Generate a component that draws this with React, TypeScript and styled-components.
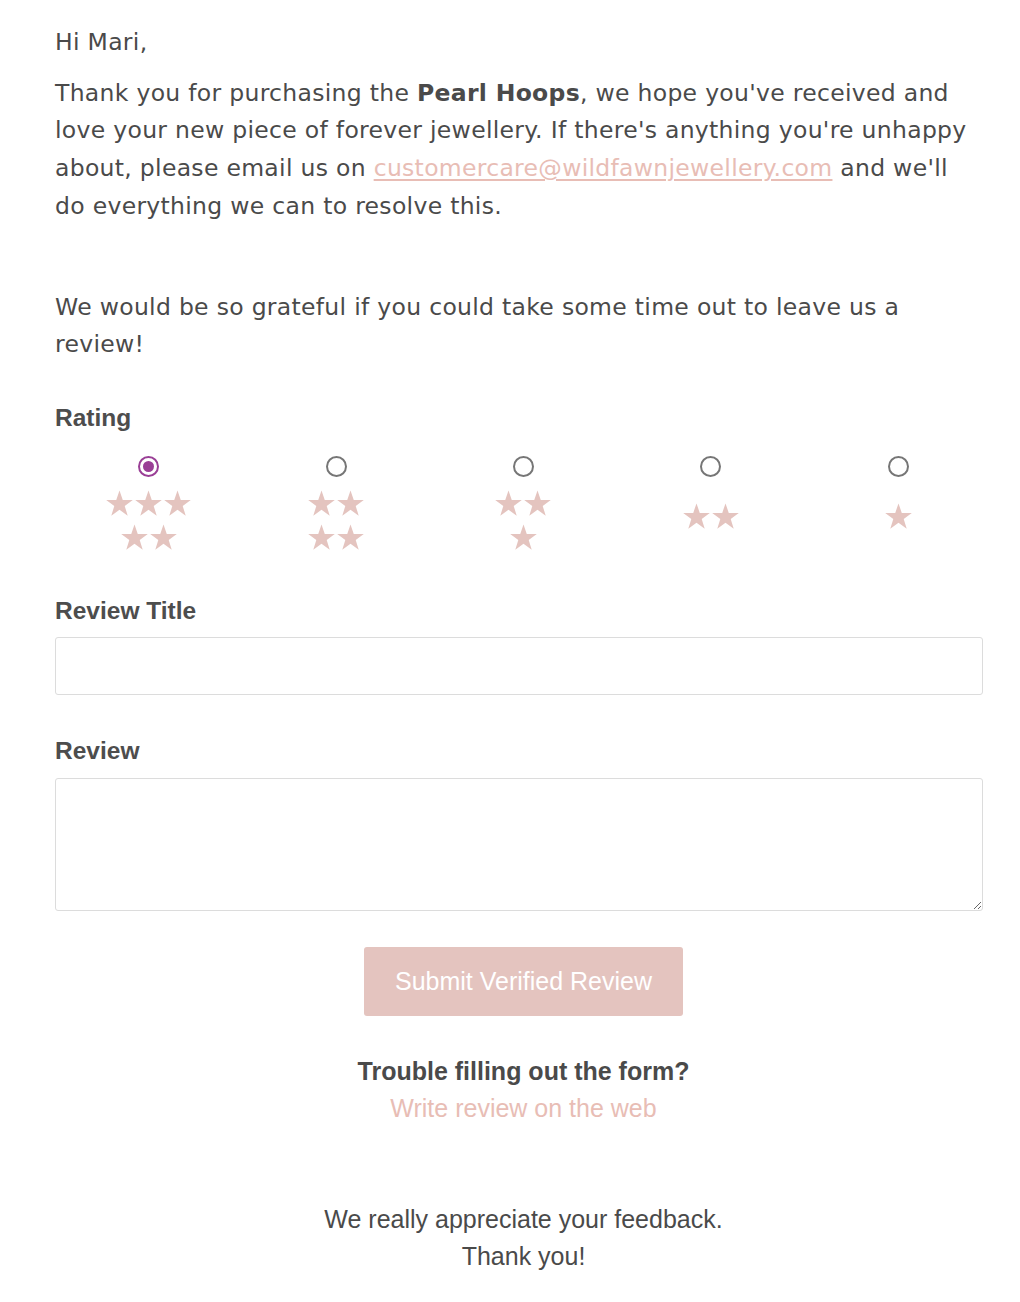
import { FC } from 'react';
import styled, { createGlobalStyle } from 'styled-components';

const GlobalStyle = createGlobalStyle`
  body {
    margin: 0;
    background: #fff;
    color: #4a4a4a;
  }
`;

const pink = '#e4c4bf';

const Page = styled.div`
  width: 937px;
  padding: 24px 0 30px 55px;
  font-family: 'DejaVu Sans', Verdana, sans-serif;
`;

const Letter = styled.p<{ $gap?: number }>`
  max-width: 918px;
  margin: 0 0 ${({ $gap }) => $gap ?? 13}px;
  font-size: 23.5px;
  line-height: 37.7px;
  letter-spacing: 0.3px;
`;

const MailLink = styled.a`
  color: #e8bdb5;
  text-decoration: underline;
  text-underline-offset: 3px;
`;

const Label = styled.div<{ $top: number }>`
  margin-top: ${({ $top }) => $top}px;
  font-family: 'Liberation Sans', Arial, sans-serif;
  font-weight: bold;
  font-size: 24.5px;
  line-height: 30px;
  color: #4d4d4d;
`;

const Ratings = styled.div`
  display: grid;
  grid-template-columns: repeat(5, 1fr);
  margin-top: 23px;
`;

const RatingOption = styled.label`
  display: flex;
  flex-direction: column;
  align-items: center;
`;

const Radio = styled.input.attrs({ type: 'radio' })`
  appearance: none;
  margin: 0;
  width: 21px;
  height: 21px;
  border-radius: 50%;
  border: 2px solid #767676;
  background: #fff;
  display: grid;
  place-items: center;

  &:checked {
    border-color: #9a3f96;
  }
  &:checked::after {
    content: '';
    width: 11px;
    height: 11px;
    border-radius: 50%;
    background: #9a3f96;
  }
`;

const Stars = styled.div<{ $single: boolean }>`
  display: flex;
  flex-direction: column;
  justify-content: center;
  align-items: center;
  gap: 5px;
  height: 64px;
  box-sizing: border-box;
  padding-bottom: ${({ $single }) => ($single ? 8 : 0)}px;
  margin-top: 12px;
`;

const StarRow = styled.div`
  display: flex;
`;

const StarIcon = styled.svg`
  width: 29px;
  height: 29px;
  fill: ${pink};
`;

const TextInput = styled.input`
  display: block;
  box-sizing: border-box;
  width: 928px;
  height: 58px;
  margin-top: 11px;
  border: 1px solid #dcdcdc;
  border-radius: 3px;
  font-size: 20px;
  padding: 0 12px;
`;

const TextArea = styled.textarea`
  display: block;
  box-sizing: border-box;
  width: 928px;
  height: 133px;
  margin-top: 12px;
  border: 1px solid #dcdcdc;
  border-radius: 3px;
  font-size: 20px;
  padding: 10px 12px;
`;

const Footer = styled.div`
  display: flex;
  flex-direction: column;
  align-items: center;
  font-family: 'Liberation Sans', Arial, sans-serif;
  font-size: 25px;
  line-height: 37.5px;
  color: #4a4a4a;
`;

const SubmitButton = styled.button`
  margin-top: 36px;
  width: 319px;
  height: 69px;
  border: none;
  border-radius: 3px;
  background: ${pink};
  color: #fff;
  font-family: 'Liberation Sans', Arial, sans-serif;
  font-size: 25px;
`;

const Trouble = styled.div`
  margin-top: 37px;
  font-weight: bold;
`;

const WebLink = styled.a`
  color: #e8bdb5;
  text-decoration: none;
`;

const Thanks = styled.div`
  margin-top: 73px;
  text-align: center;
`;

const Star: FC = () => (
  <StarIcon viewBox="0 0 24 24">
    <polygon points="12,1.2 14.7,9 23,9 16.3,14 18.8,22.2 12,17.2 5.2,22.2 7.7,14 1,9 9.3,9" />
  </StarIcon>
);

// star rows per rating, as laid out in the form
const ratings = [
  { value: 5, rows: [3, 2] },
  { value: 4, rows: [2, 2] },
  { value: 3, rows: [2, 1] },
  { value: 2, rows: [2] },
  { value: 1, rows: [1] },
];

const App: FC = () => (
  <>
    <GlobalStyle />
    <Page>
      <Letter>Hi Mari,</Letter>
      <Letter $gap={63}>
        Thank you for purchasing the <b>Pearl Hoops</b>, we hope you've received and love
        your new piece of forever jewellery. If there's anything you're unhappy about, please
        email us on <MailLink href="#">customercare@wildfawnjewellery.com</MailLink> and we'll
        do everything we can to resolve this.
      </Letter>
      <Letter $gap={0}>
        We would be so grateful if you could take some time out to leave us a review!
      </Letter>

      <Label $top={39}>Rating</Label>
      <Ratings>
        {ratings.map(({ value, rows }) => (
          <RatingOption key={value}>
            <Radio name="rating" defaultChecked={value === 5} />
            <Stars $single={rows.length === 1}>
              {rows.map((count, r) => (
                <StarRow key={r}>
                  {Array.from({ length: count }).map((_, i) => (
                    <Star key={i} />
                  ))}
                </StarRow>
              ))}
            </Stars>
          </RatingOption>
        ))}
      </Ratings>

      <Label $top={43}>Review Title</Label>
      <TextInput />

      <Label $top={41}>Review</Label>
      <TextArea />

      <Footer>
        <SubmitButton>Submit Verified Review</SubmitButton>
        <Trouble>Trouble filling out the form?</Trouble>
        <WebLink href="#">Write review on the web</WebLink>
        <Thanks>
          We really appreciate your feedback.
          <br />
          Thank you!
        </Thanks>
      </Footer>
    </Page>
  </>
);

export default App;
